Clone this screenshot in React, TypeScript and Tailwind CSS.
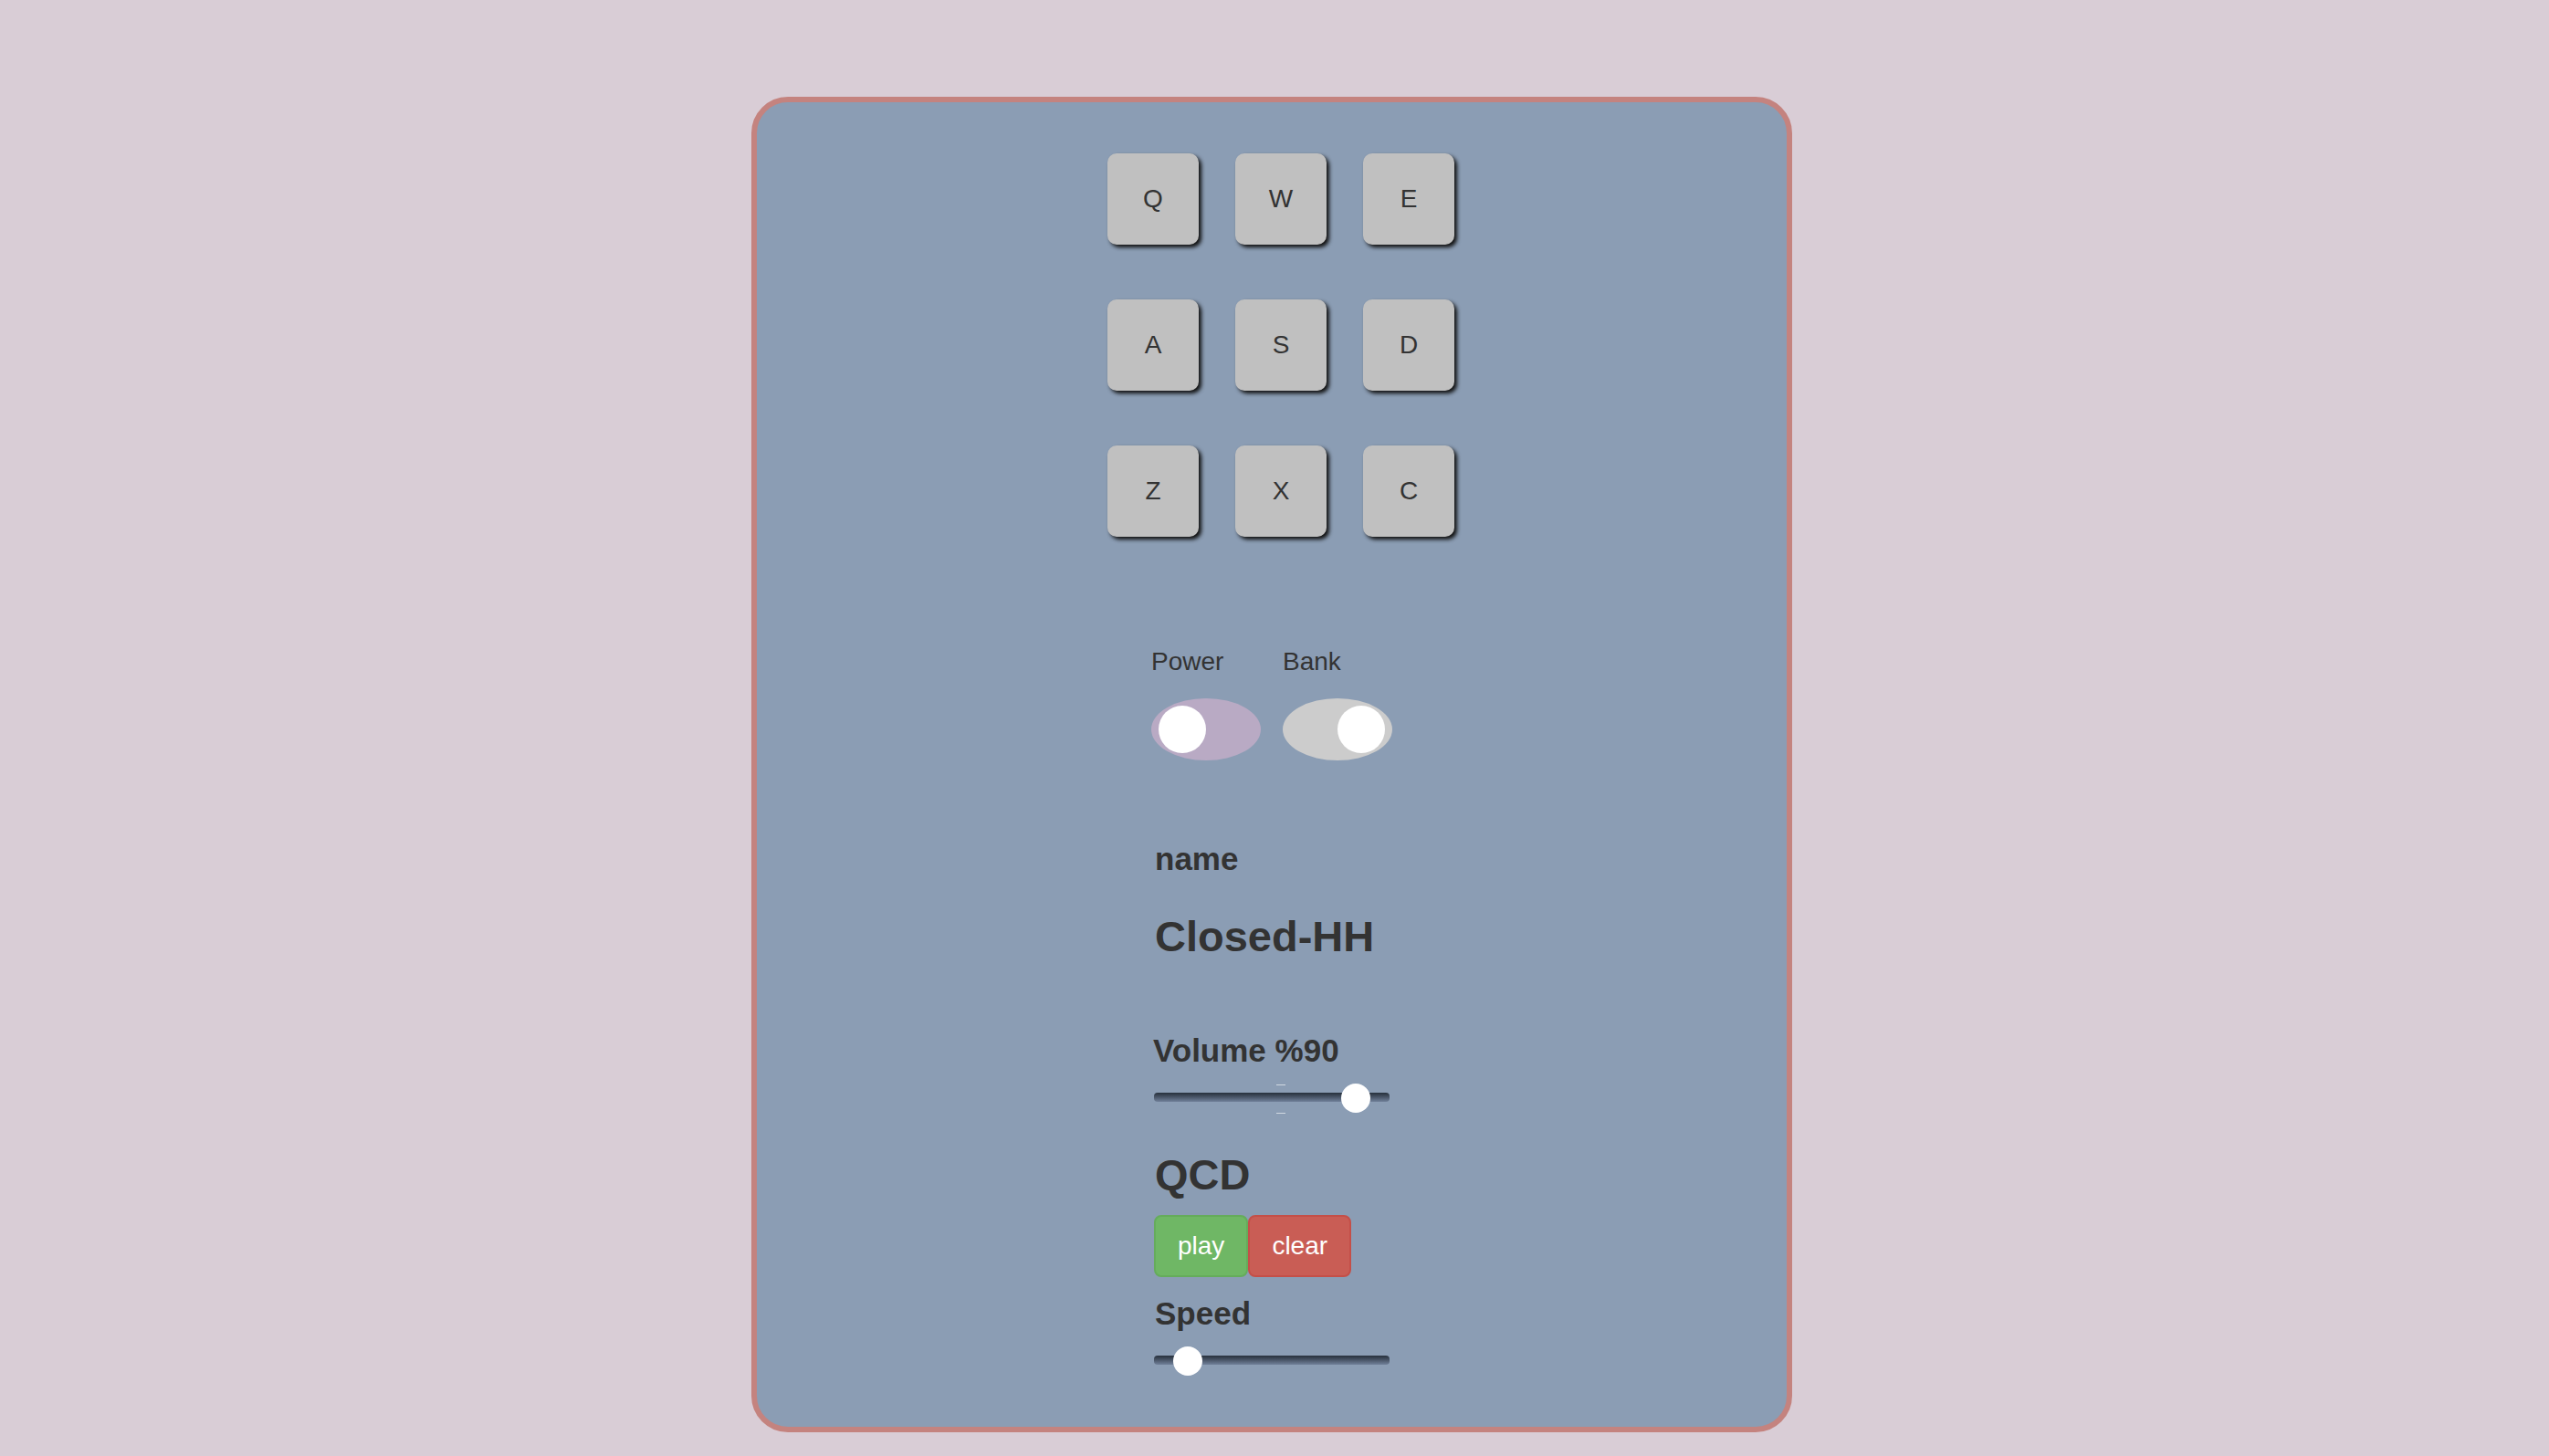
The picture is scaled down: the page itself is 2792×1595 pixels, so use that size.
import React from "react";

const keys = ["Q", "W", "E", "A", "S", "D", "Z", "X", "C"];

function Toggle({ label, on }: { label: string; on: boolean }) {
  return (
    <div className="flex flex-col">
      <span className="text-[28px] leading-[32px] text-[#333]">{label}</span>
      <div
        className={
          on
            ? "mt-[24px] flex h-[68px] w-[120px] items-center justify-end rounded-[50%] bg-[#cccccc] px-[8px]"
            : "mt-[24px] flex h-[68px] w-[120px] items-center justify-start rounded-[50%] bg-[#b9aac4] px-[8px]"
        }
      >
        <div className="h-[52px] w-[52px] rounded-full bg-white" />
      </div>
    </div>
  );
}

function Slider({ thumbLeft, ticks }: { thumbLeft: string; ticks?: boolean }) {
  return (
    <div className="relative ml-[3px] h-[32px] w-[258px]">
      <div className="absolute left-0 right-0 top-[10px] h-[10px] rounded-[4px] bg-gradient-to-b from-[#27303c] to-[#71819a]" />
      {ticks && (
        <>
          <div className="absolute left-[134px] top-[1px] h-[1px] w-[10px] bg-white/60" />
          <div className="absolute left-[134px] top-[32px] h-[1px] w-[10px] bg-white/60" />
        </>
      )}
      <div className={"absolute top-0 h-[32px] w-[32px] rounded-full bg-white " + thumbLeft} />
    </div>
  );
}

export default function App() {
  return (
    <div className="min-h-screen bg-[#d9cdd6] pr-[6px] pt-[106px] font-['Liberation_Sans',Arial,sans-serif] text-[#333]">
      <div className="mx-auto flex w-[1140px] flex-col items-center rounded-[40px] border-[6px] border-[#c4837f] bg-[#8b9db4] pb-[56px] pt-[56px]">
        <div className="ml-[20px] grid grid-cols-3 gap-x-[40px] gap-y-[60px]">
          {keys.map((k) => (
            <div
              key={k}
              className="flex h-[100px] w-[100px] items-center justify-center rounded-[10px] bg-[#c0c0c0] text-[28px] shadow-[3px_3px_4px_#111]"
            >
              {k}
            </div>
          ))}
        </div>

        <div className="mt-[121px] flex w-[264px] gap-[24px]">
          <Toggle label="Power" on={false} />
          <Toggle label="Bank" on={true} />
        </div>

        <div className="mt-[88px] flex w-[264px] flex-col items-start">
          <div className="ml-[4px] text-[35px] font-bold leading-[40px]">name</div>
          <div className="ml-[4px] mt-[37px] text-[47px] font-bold leading-[56px]">Closed-HH</div>
          <div className="ml-[2px] mt-[77px] text-[35px] font-bold leading-[40px]">Volume %90</div>
          <div className="mt-[16px]">
            <Slider thumbLeft="left-[205px]" ticks />
          </div>
          <div className="ml-[4px] mt-[40px] text-[47px] font-bold leading-[56px]">QCD</div>
          <div className="ml-[3px] mt-[16px] flex">
            <button className="rounded-[8px] border-2 border-[#65ac5b] bg-[#6fb765] px-[24px] py-[12px] text-[28px] leading-[40px] text-white">
              play
            </button>
            <button className="rounded-[8px] border-2 border-[#c44f48] bg-[#c95d55] px-[24px] py-[12px] text-[28px] leading-[40px] text-white">
              clear
            </button>
          </div>
          <div className="ml-[4px] mt-[20px] text-[35px] font-bold leading-[40px]">Speed</div>
          <div className="mt-[16px]">
            <Slider thumbLeft="left-[21px]" />
          </div>
        </div>
      </div>
    </div>
  );
}
